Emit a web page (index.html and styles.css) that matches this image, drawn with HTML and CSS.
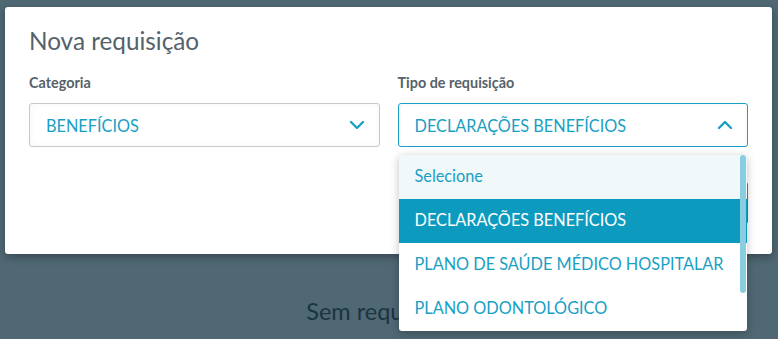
FILE: index.html
```html
<!DOCTYPE html>
<html lang="pt-BR">
<head>
	<meta charset="UTF-8">
	<title>Nova requisição</title>
	<link rel="stylesheet" href="styles.css">
</head>
<body>
	<div class="page">
		<p class="empty">Sem requisições</p>
	</div>

	<div class="modal">
		<h2 class="modal-title">Nova requisição</h2>
		<div class="fields">
			<div class="field">
				<label class="field-label">Categoria</label>
				<div class="select">
					<span class="select-value">BENEFÍCIOS</span>
					<svg class="chevron" width="16" height="10" viewBox="0 0 16 10"><path d="M2 2l6 6 6-6" fill="none" stroke="#1a9fc4" stroke-width="2.4" stroke-linecap="round" stroke-linejoin="round"/></svg>
				</div>
			</div>
			<div class="field">
				<label class="field-label">Tipo de requisição</label>
				<div class="select select-open">
					<span class="select-value">DECLARAÇÕES BENEFÍCIOS</span>
					<svg class="chevron" width="16" height="10" viewBox="0 0 16 10"><path d="M2 8l6-6 6 6" fill="none" stroke="#1a9fc4" stroke-width="2.4" stroke-linecap="round" stroke-linejoin="round"/></svg>
					<ul class="options">
						<li class="option option-placeholder">Selecione</li>
						<li class="option option-active">DECLARAÇÕES BENEFÍCIOS</li>
						<li class="option">PLANO DE SAÚDE MÉDICO HOSPITALAR</li>
						<li class="option">PLANO ODONTOLÓGICO</li>
						<span class="scrollbar"></span>
					</ul>
				</div>
			</div>
		</div>
		<div class="modal-footer">
			<button class="btn">Salvar</button>
		</div>
	</div>
</body>
</html>
```

FILE: styles.css
```css
body {
	margin: 0;
	background-color: #4f6873;
	font-family: "Lato", "Open Sans", sans-serif;
	overflow: hidden;
}

.page {
	height: 339px;
	display: flex;
	justify-content: center;
}

.empty {
	margin: 296px 0 0 0;
	font-size: 23.5px;
	line-height: 30px;
	color: #1b3441;
	white-space: nowrap;
}

.modal {
	position: absolute;
	top: 7px;
	left: 5px;
	width: 767px;
	height: 247px;
	box-sizing: border-box;
	padding: 20px 24px 0 24px;
	background-color: #fff;
	border-radius: 3px;
	box-shadow: 0 3px 8px rgba(0, 0, 0, .3);
}

.modal-title {
	margin: 0;
	font-size: 24.3px;
	font-weight: 400;
	line-height: 28px;
	color: #55626a;
}

.fields {
	display: flex;
	gap: 18px;
	margin-top: 19px;
}

.field {
	flex: 1;
}

.field-label {
	display: block;
	font-size: 14.4px;
	font-weight: 700;
	color: #566268;
	line-height: 18px;
	margin-bottom: 11px;
}

.select {
	position: relative;
	display: flex;
	align-items: center;
	justify-content: space-between;
	height: 44px;
	box-sizing: border-box;
	padding: 0 14px 0 16px;
	border: 1px solid #c3c9cc;
	border-radius: 3px;
	box-shadow: inset 0 0 6px rgba(0, 0, 0, .04);
}

.select-open {
	border-color: #1a9fc4;
}

.select-value {
	font-size: 16.3px;
	color: #1a9fc4;
}

.options {
	position: absolute;
	top: 51px;
	left: 0;
	right: 0;
	margin: 0;
	padding: 0;
	list-style: none;
	background-color: #fff;
	border-radius: 3px;
	box-shadow: 0 2px 8px rgba(0, 0, 0, .25);
	overflow: hidden;
	z-index: 10;
}

.option {
	height: 44px;
	box-sizing: border-box;
	padding: 0 0 3px 16px;
	display: flex;
	align-items: center;
	font-size: 16.3px;
	color: #1a9fc4;
}

.option-placeholder {
	background-color: #f1f8fa;
}

.option-active {
	background-color: #0c9bbf;
	color: #fff;
}

.scrollbar {
	position: absolute;
	top: 0;
	right: 1px;
	width: 6px;
	height: 138px;
	border-radius: 3px;
	background-color: #8bcde0;
}

.modal-footer {
	display: flex;
	justify-content: flex-end;
	margin-top: 35px;
}

.btn {
	height: 42px;
	padding: 0 30px;
	border: none;
	border-radius: 3px;
	background-color: #0c9bbf;
	color: #fff;
	font-family: inherit;
	font-size: 15px;
}
```
